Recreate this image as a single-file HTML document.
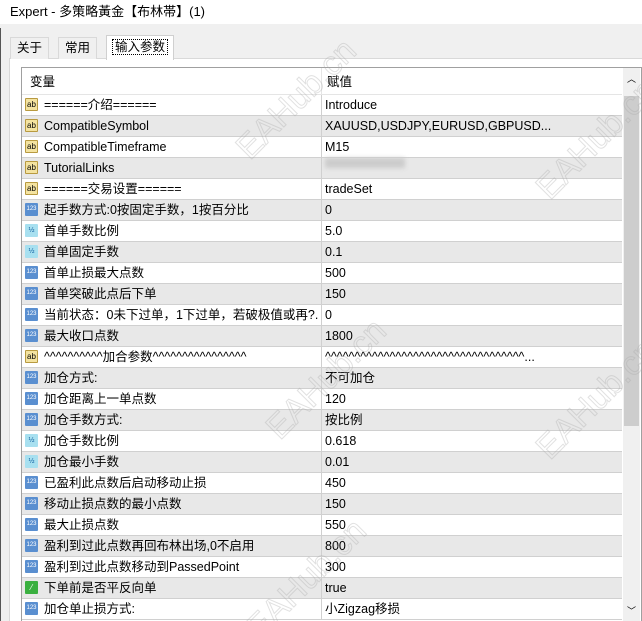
<html><head><style>
html,body{margin:0;width:642px;height:621px;overflow:hidden}
body{background:#f0f0f0;font-family:"Liberation Sans","Noto Sans CJK SC",sans-serif;font-size:12.5px;color:#000;position:relative}
.t{position:absolute;left:0;top:0;width:642px;height:24px;background:#fff;}
.t span{position:absolute;left:10px;top:0;line-height:24px;font-size:13px}
.tab{position:absolute;top:37px;height:21px;border:1px solid #d9d9d9;border-bottom:none;background:#f0f0f0;line-height:21px;padding:0 6px}
.pane{position:absolute;left:9px;top:58px;width:640px;height:570px;background:#fff;border:1px solid #d9d9d9}
.tbl{position:absolute;left:21px;top:67px;width:619px;height:560px;border:1px solid #a0a0a0;background:#fff;overflow:hidden}
.hd{position:absolute;left:0;top:0;width:600px;height:26px;border-bottom:1px solid #e5e5e5}
.hd span{position:absolute;top:3px;line-height:22px}
.r{position:absolute;left:0;width:600px;height:20px;border-bottom:1px solid #d0d0d0;line-height:20px}
.r.g{background:#e8e8e8}
.r .n{position:absolute;left:22px;top:0;white-space:nowrap;width:274px;overflow:hidden}
.r .v{position:absolute;left:303px;top:0;white-space:nowrap}
.r .d{position:absolute;left:299px;top:0;width:1px;height:20px;background:#d0d0d0}
.ic{position:absolute;left:3px;top:3px;width:13px;height:13px;font-size:8px;line-height:13px;text-align:center;border-radius:1px}
.ab{background:#f4e3a0;border:1px solid #b89a40;width:11px;height:11px;line-height:11px;font-size:8px}
.i3{background:#5a8fd0;color:#fff;font-size:6px}
.hf{background:#a8e0f0;color:#1060a0;font-size:7px}
.bo{background:#3ab040;color:#fff}
.sb{position:absolute;left:601px;top:0;width:17px;height:560px;background:#f0f0f0}
.th{position:absolute;left:1px;top:28px;width:15px;height:330px;background:#cdcdcd}
.wm{position:absolute;color:transparent;-webkit-text-stroke:1px rgba(170,170,170,.35);font-size:34px;transform:rotate(-45deg);font-family:"Liberation Sans",sans-serif}
</style></head><body>
<div class="t"><span>Expert - 多策略黃金【布林帯】(1)</span></div>
<div style="position:absolute;left:0;top:28px;width:1px;height:593px;background:#555"></div>
<div class="pane"></div>
<div class="tab" style="left:10px">关于</div>
<div class="tab" style="left:58px">常用</div>
<div class="tab" style="left:106px;top:35px;height:24px;line-height:22px;background:#fff;border-color:#d0d0d0"><span style="outline:1px dotted #000;padding:0 2px">输入参数</span></div>
<div class="tbl">
<div class="hd"><span style="left:8px">变量</span><span style="left:305px">赋值</span><div style="position:absolute;left:299px;top:0;width:1px;height:26px;background:#e5e5e5"></div></div>
<div id="rows"></div>
<div class="sb"><div style="position:absolute;left:4px;top:4px;font-size:9px">︿</div><div class="th"></div><div style="position:absolute;left:4px;top:536px;font-size:9px">﹀</div></div>
</div>
<script>
var d=[["ab","======介绍======","Introduce"],["ab","CompatibleSymbol","XAUUSD,USDJPY,EURUSD,GBPUSD..."],["ab","CompatibleTimeframe","M15"],["ab","TutorialLinks","<span style='display:inline-block;vertical-align:middle;width:80px;height:10px;background:#ccc;filter:blur(2px)'></span>"],["ab","======交易设置======","tradeSet"],["i3","起手数方式:0按固定手数，1按百分比","0"],["hf","首单手数比例","5.0"],["hf","首单固定手数","0.1"],["i3","首单止损最大点数","500"],["i3","首单突破此点后下单","150"],["i3","当前状态：0未下过单，1下过单，若破极值或再?...","0"],["i3","最大收口点数","1800"],["ab","^^^^^^^^^^加合参数^^^^^^^^^^^^^^^^","^^^^^^^^^^^^^^^^^^^^^^^^^^^^^^^^^^..."],["i3","加仓方式:","不可加仓"],["i3","加仓距离上一单点数","120"],["i3","加仓手数方式:","按比例"],["hf","加仓手数比例","0.618"],["hf","加仓最小手数","0.01"],["i3","已盈利此点数后启动移动止损","450"],["i3","移动止损点数的最小点数","150"],["i3","最大止损点数","550"],["i3","盈利到过此点数再回布林出场,0不启用","800"],["i3","盈利到过此点数移动到PassedPoint","300"],["bo","下单前是否平反向单","true"],["i3","加仓单止损方式:","小Zigzag移损"]];
var h="",lab={ab:"ab",i3:"123",hf:"½",bo:"⁄"};
d.forEach(function(x,i){h+='<div class="r'+(i%2?' g':'')+'" style="top:'+(27+i*21)+'px"><div class="ic '+x[0]+'">'+lab[x[0]]+'</div><div class="n">'+x[1]+'</div><div class="d"></div><div class="v">'+x[2]+'</div></div>';});
document.getElementById("rows").innerHTML=h;
</script>
<div class="wm" style="left:220px;top:80px">EAHub.cn</div>
<div class="wm" style="left:520px;top:120px">EAHub.cn</div>
<div class="wm" style="left:250px;top:360px">EAHub.cn</div>
<div class="wm" style="left:520px;top:380px">EAHub.cn</div>
<div class="wm" style="left:230px;top:560px">EAHub.cn</div>
</body></html>
